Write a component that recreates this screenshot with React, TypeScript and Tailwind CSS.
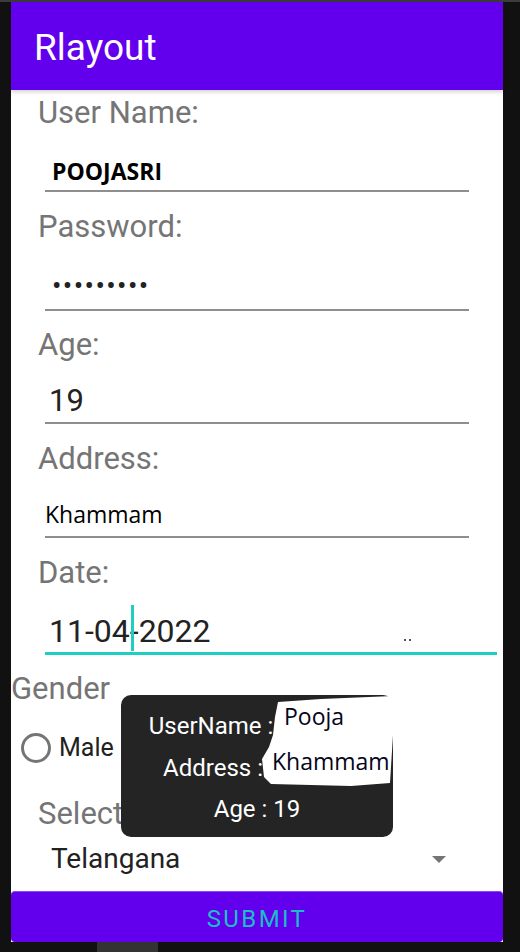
import React from 'react';

const LABEL = "font-['Roboto',sans-serif] text-[31px] leading-[32px] text-[#757575] pl-[27px]";
const LINE = 'border-b-2 border-[#8e8e8e]';

function Field({ label, className, children }: { label: string; className: string; children: React.ReactNode }) {
  return (
    <div className="flex flex-col">
      <div className={LABEL}>{label}</div>
      <div className={className}>{children}</div>
    </div>
  );
}

function Toast() {
  return (
    <div className="absolute left-[121px] top-[695px] h-[142px] w-[272px] rounded-[10px] bg-[#242424] font-['Roboto',sans-serif] text-[24px] leading-[32px] text-white">
      <div className="flex flex-col items-center pt-[15px] gap-[9.5px]">
        <div className="flex">
          <span>UserName :</span>
          <span className="inline-block w-[92px]" />
        </div>
        <div className="flex">
          <span>Address :</span>
          <span className="inline-block w-[88px]" />
        </div>
        <div>Age : 19</div>
      </div>
      {/* scribbled-over values */}
      <svg className="absolute left-0 top-0" width="272" height="142" viewBox="0 0 272 142">
        <path
          d="M157 7 L200 4 L272 1 L272 40 L269 88 L230 91 L150 89 L143 82 L141 64 L148 52 L152 40 L154 22 Z"
          fill="#ffffff"
        />
      </svg>
      <div className="absolute left-[163px] top-[5px] font-['Open_Sans',sans-serif] text-[23px] leading-[32px] text-[#050520]">Pooja</div>
      <div className="absolute left-[151px] top-[50px] font-['Open_Sans',sans-serif] text-[23px] leading-[32px] text-[#050520]">Khammam</div>
    </div>
  );
}

export default function App() {
  return (
    <div className="relative flex h-[952px] w-[520px] flex-col overflow-hidden bg-[#111111]">
      <div className="h-[2px] w-full bg-[#3b3b3b]" />
      <div className="ml-[11px] flex h-[940px] w-[492px] flex-col bg-white">
        <div className="relative z-10 flex h-[88px] shrink-0 items-center bg-[#6200ee] pl-[23px] pt-[4px] shadow-[0_2px_4px_rgba(0,0,0,0.18)]">
          <span className="font-['Roboto',sans-serif] text-[37px] leading-[40px] text-white">Rlayout</span>
        </div>

        <div className="flex flex-col pt-[7px]">
          <Field label="User Name:" className={`ml-[34px] w-[424px] pt-[26px] pb-[3px] pl-[7px] ${LINE}`}>
            <div className="font-['Open_Sans',sans-serif] text-[23px] font-bold leading-[32px] text-black">POOJASRI</div>
          </Field>

          <div className="mt-[19px]">
            <Field label="Password:" className={`ml-[34px] w-[424px] pt-[27px] pb-[7px] pl-[7px] ${LINE}`}>
              <div className="font-['Roboto',sans-serif] text-[28px] leading-[32px] tracking-[1.4px] text-[#222222]">•••••••••</div>
            </Field>
          </div>

          <div className="mt-[18px]">
            <Field label="Age:" className={`ml-[34px] w-[424px] pt-[24px] pb-[5px] pl-[4px] ${LINE}`}>
              <div className="font-['Roboto',sans-serif] text-[31px] leading-[32px] text-[#222222]">19</div>
            </Field>
          </div>

          <div className="mt-[19px]">
            <Field label="Address:" className={`ml-[34px] w-[424px] pt-[23px] pb-[6px] pl-[0px] ${LINE}`}>
              <div className="font-['Open_Sans',sans-serif] text-[23px] leading-[32px] text-black">Khammam</div>
            </Field>
          </div>

          <div className="mt-[19px]">
            <Field label="Date:" className="relative ml-[34px] w-[452px] border-b-[3px] border-[#1cd0c1] pt-[26px] pb-[5px] pl-[4px]">
              <div className="font-['Roboto',sans-serif] text-[32px] leading-[32px] text-[#222222]">
                11-04
                <span className="relative">
                  <span className="absolute left-[1px] top-[-7px] h-[46px] w-[3px] bg-[#1cd0c1]" />
                </span>
                -2022
              </div>
              <span className="absolute left-[359px] top-[50px] h-[2px] w-[2px] bg-[#555555]" />
              <span className="absolute left-[364px] top-[50px] h-[2px] w-[2px] bg-[#555555]" />
            </Field>
          </div>

          <div className="mt-[18px] font-['Roboto',sans-serif] text-[31px] leading-[32px] text-[#757575]">Gender</div>

          <div className="mt-[23px] flex h-[40px] items-center pl-[10px]">
            <span className="h-[30px] w-[30px] rounded-full border-[3px] border-[#757575]" />
            <span className="ml-[8px] font-['Roboto',sans-serif] text-[25px] leading-[32px] text-[#212121]">Male</span>
          </div>

          <div className={`mt-[30px] ${LABEL}`}>Select</div>

          <div className="mt-[13px] flex h-[32px] items-center justify-between pl-[40px] pr-[57px]">
            <span className="font-['Roboto',sans-serif] text-[28px] leading-[32px] text-[#222222]">Telangana</span>
            <svg width="14" height="7" viewBox="0 0 14 7">
              <path d="M0 0 L14 0 L7 7 Z" fill="#757575" />
            </svg>
          </div>
        </div>

        <div className="mt-auto flex h-[51px] items-center justify-center rounded-[4px] border-t border-[#8a4cf2] bg-[#6200ee] pt-[3px]">
          <span className="font-['Roboto',sans-serif] text-[24px] leading-[28px] tracking-[2.4px] text-[#19bfc4]">SUBMIT</span>
        </div>
      </div>
      <div className="flex h-[10px]">
        <div className="ml-[97px] h-full w-[61px] bg-[#333333]" />
      </div>

      <Toast />
    </div>
  );
}
